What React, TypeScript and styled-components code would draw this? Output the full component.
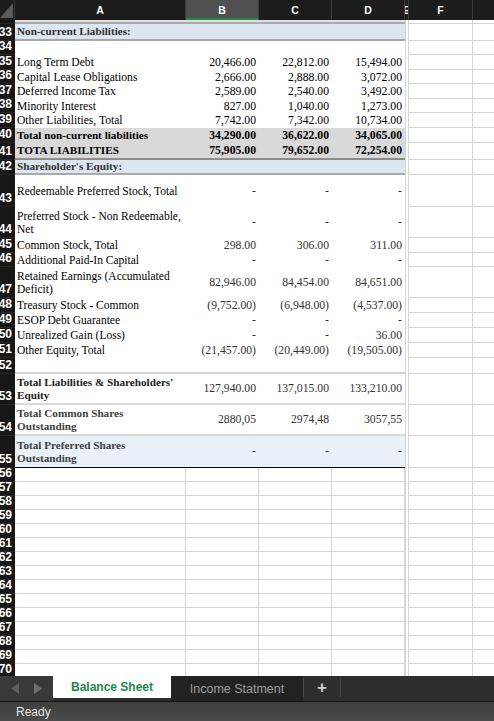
import React from 'react';
import styled, { createGlobalStyle } from 'styled-components';

const COLS = '15px 171px 73px 73px 73px 4px 64px 64px';

const GlobalStyle = createGlobalStyle`
  html, body { margin: 0; padding: 0; background: #ffffff; overflow: hidden; }
  #root { width: 494px; height: 721px; overflow: hidden; }
`;

const Window = styled.div`
  width: 494px;
  height: 721px;
  display: flex;
  flex-direction: column;
  overflow: hidden;
  background: #ffffff;
`;

const HeaderBar = styled.div`
  flex: none;
  display: grid;
  grid-template-columns: ${COLS};
  height: 20px;
  background: #1c1c1c;
`;

const Corner = styled.div`
  box-sizing: border-box;
  border-right: 1px solid #3a3a3a;
  display: flex;
  align-items: flex-end;
  justify-content: flex-end;
  padding: 0 1px 2px 0;
`;

const ColHead = styled.div<{ $sel?: boolean }>`
  box-sizing: border-box;
  display: flex;
  align-items: center;
  justify-content: center;
  overflow: hidden;
  color: #ffffff;
  font: bold 10.5px 'Liberation Sans', Arial, sans-serif;
  border-right: 1px solid #3e3e3e;
  background: ${(p) => (p.$sel ? '#505050' : 'transparent')};
  border-bottom: 2px solid ${(p) => (p.$sel ? '#1f8a4c' : 'transparent')};
  padding-top: 2px;
`;

const Sheet = styled.div`
  flex: 1;
  display: flex;
  flex-direction: column;
  overflow: hidden;
`;

const Row = styled.div<{ $h: number }>`
  flex: none;
  display: grid;
  grid-template-columns: ${COLS};
  height: ${(p) => p.$h}px;
`;

const RowNum = styled.div`
  box-sizing: border-box;
  background: #171717;
  color: #ffffff;
  font: bold 12px 'Liberation Sans', Arial, sans-serif;
  display: flex;
  align-items: flex-end;
  justify-content: flex-end;
  padding: 0 3px 1px 0;
  overflow: hidden;
  white-space: nowrap;
  border-bottom: 1px solid #262626;
`;

type CellProps = {
  $fill?: string;
  $bb?: string;
  $grid?: boolean;
  $bold?: boolean;
  $color?: string;
  $size?: number;
};

const Cell = styled.div<CellProps>`
  box-sizing: border-box;
  display: flex;
  align-items: center;
  overflow: hidden;
  background: ${(p) => p.$fill || '#ffffff'};
  border-bottom: ${(p) => p.$bb || (p.$grid ? '1px solid #d6d6d6' : 'none')};
  border-right: ${(p) => (p.$grid ? '1px solid #d6d6d6' : 'none')};
  font-family: 'Liberation Serif', 'Times New Roman', serif;
  font-size: ${(p) => p.$size || 11.7}px;
  font-weight: ${(p) => (p.$bold ? 'bold' : 'normal')};
  color: ${(p) => p.$color || '#000000'};
  line-height: 13px;
`;

const LabelCell = styled(Cell)`
  padding-left: 2px;
  white-space: pre-line;
`;

const NumCell = styled(Cell)`
  justify-content: flex-end;
  padding-right: 3px;
  white-space: nowrap;
`;

const GapCell = styled.div`
  box-sizing: border-box;
  border-left: 1px solid #d6d6d6;
  border-right: 1px solid #d6d6d6;
  background: #ffffff;
`;

const GridCell = styled.div`
  box-sizing: border-box;
  background: #ffffff;
  border-right: 1px solid #d6d6d6;
  border-bottom: 1px solid #d6d6d6;
`;

const TabBar = styled.div`
  flex: none;
  height: 26px;
  box-sizing: border-box;
  display: flex;
  background: #2e2e2e;
  border-bottom: 1px solid #161616;
`;

const NavArea = styled.div`
  width: 53px;
  display: flex;
  align-items: center;
  justify-content: space-around;
  padding: 0 4px;
  box-sizing: border-box;
  background: #393939;
`;

const Tab = styled.div<{ $active?: boolean; $w: number }>`
  width: ${(p) => p.$w}px;
  box-sizing: border-box;
  display: flex;
  align-items: center;
  justify-content: center;
  font-family: 'Liberation Sans', Arial, sans-serif;
  font-size: ${(p) => (p.$active ? 12 : 12.5)}px;
  font-weight: ${(p) => (p.$active ? 'bold' : 'normal')};
  color: ${(p) => (p.$active ? '#1b8a4b' : '#9c9c9c')};
  background: ${(p) => (p.$active ? '#ffffff' : '#222222')};
  height: ${(p) => (p.$active ? '22px' : '100%')};
`;

const AddTab = styled.div`
  width: 38px;
  display: flex;
  align-items: center;
  justify-content: center;
  box-sizing: border-box;
  margin: 2px 0 4px;
  border-left: 1px solid #4a4a4a;
  border-right: 1px solid #4a4a4a;
  color: #cfcfcf;
  font: bold 17px 'Liberation Sans', Arial, sans-serif;
`;

const StatusBar = styled.div`
  flex: none;
  height: 19px;
  display: flex;
  align-items: center;
  padding-left: 16px;
  background: linear-gradient(#3f3f3f, #4a4a4a);
  color: #e4e4e4;
  font: 12px 'Liberation Sans', Arial, sans-serif;
`;

type RowDef = {
  n: number | '';
  h: number;
  label?: string;
  vals?: [string, string, string];
  fill?: string;
  bb?: string;
  bold?: boolean;
  numBold?: boolean;
  color?: string;
  numColor?: string;
  labelSize?: number;
};

const dash: [string, string, string] = ['-', '-', '-'];

const rows: RowDef[] = [
  { n: '', h: 4, fill: '#dedede', bb: '2px solid #ababab' },
  { n: 33, h: 17, label: 'Non-current Liabilities:', fill: '#dce6f1', bb: '2px solid #a6a6a6', bold: true, color: '#333333', labelSize: 11.2 },
  { n: 34, h: 14 },
  { n: 35, h: 15, label: 'Long Term Debt', vals: ['20,466.00', '22,812.00', '15,494.00'] },
  { n: 36, h: 14, label: 'Capital Lease Obligations', vals: ['2,666.00', '2,888.00', '3,072.00'] },
  { n: 37, h: 15, label: 'Deferred Income Tax', vals: ['2,589.00', '2,540.00', '3,492.00'] },
  { n: 38, h: 14, label: 'Minority Interest', vals: ['827.00', '1,040.00', '1,273.00'] },
  { n: 39, h: 15, label: 'Other Liabilities, Total', vals: ['7,742.00', '7,342.00', '10,734.00'] },
  { n: 40, h: 15, label: 'Total non-current liabilities', vals: ['34,290.00', '36,622.00', '34,065.00'], fill: '#d9d9d9', bold: true, numBold: true, labelSize: 11.2 },
  { n: 41, h: 17, label: 'TOTA LIABILITIES', vals: ['75,905.00', '79,652.00', '72,254.00'], fill: '#d9d9d9', bb: '2px solid #8c8c8c', bold: true, numBold: true, labelSize: 11.2 },
  { n: 42, h: 15, label: "Shareholder's Equity:", fill: '#dce6f1', bb: '2px solid #a9a9a9', bold: true, color: '#333333', labelSize: 11.2 },
  { n: 43, h: 32, label: 'Redeemable Preferred Stock, Total', vals: dash, labelSize: 11.5, numColor: '#333333' },
  { n: 44, h: 31, label: 'Preferred Stock - Non Redeemable,\nNet', vals: dash, labelSize: 11.5, numColor: '#333333' },
  { n: 45, h: 15, label: 'Common Stock, Total', vals: ['298.00', '306.00', '311.00'], labelSize: 11.5, numColor: '#333333' },
  { n: 46, h: 14, label: 'Additional Paid-In Capital', vals: dash, labelSize: 11.5, numColor: '#333333' },
  { n: 47, h: 31, label: 'Retained Earnings (Accumulated\nDeficit)', vals: ['82,946.00', '84,454.00', '84,651.00'], labelSize: 11.5, numColor: '#333333' },
  { n: 48, h: 15, label: 'Treasury Stock - Common', vals: ['(9,752.00)', '(6,948.00)', '(4,537.00)'], labelSize: 11.5, numColor: '#333333' },
  { n: 49, h: 15, label: 'ESOP Debt Guarantee', vals: dash, labelSize: 11.5, numColor: '#333333' },
  { n: 50, h: 15, label: 'Unrealized Gain (Loss)', vals: ['-', '-', '36.00'], labelSize: 11.5, numColor: '#333333' },
  { n: 51, h: 15, label: 'Other Equity, Total', vals: ['(21,457.00)', '(20,449.00)', '(19,505.00)'], labelSize: 11.5, numColor: '#333333' },
  { n: 52, h: 16, bb: '2px solid #d3d3d3' },
  { n: 53, h: 31, label: "Total Liabilities & Shareholders'\nEquity", vals: ['127,940.00', '137,015.00', '133,210.00'], bb: '2px solid #d9d9d9', bold: true, color: '#222222', labelSize: 11.2, numColor: '#333333' },
  { n: 54, h: 31, label: 'Total Common Shares\nOutstanding', vals: ['2880,05', '2974,48', '3057,55'], bb: '2px solid #d9d9d9', bold: true, color: '#404040', labelSize: 11.2, numColor: '#333333' },
  { n: 55, h: 32, label: 'Total Preferred Shares\nOutstanding', vals: dash, fill: '#e9f0f8', bb: '1px solid #000000', bold: true, color: '#404040', labelSize: 11.2, numColor: '#333333' },
];

const emptyRows = Array.from({ length: 15 }, (_, i) => 56 + i);

const SelectAll = () => (
  <svg width="13" height="15" viewBox="0 0 13 15">
    <polygon points="13,0 13,15 0,15" fill="#5a5a5a" />
  </svg>
);

const Arrow = ({ dir, color }: { dir: 'l' | 'r'; color: string }) => (
  <svg width="8" height="11" viewBox="0 0 8 11">
    <polygon points={dir === 'l' ? '8,0 8,11 0,5.5' : '0,0 0,11 8,5.5'} fill={color} />
  </svg>
);

const DataRow = ({ r }: { r: RowDef }) => {
  const vals = r.vals || ['', '', ''];
  return (
    <Row $h={r.h}>
      <RowNum>{r.n}</RowNum>
      <LabelCell $fill={r.fill} $bb={r.bb} $bold={r.bold} $color={r.color} $size={r.labelSize || 11.6}>
        {r.label}
      </LabelCell>
      {vals.map((v, i) => (
        <NumCell key={i} $fill={r.fill} $bb={r.bb} $bold={r.numBold} $color={r.numColor || r.color}>
          {v}
        </NumCell>
      ))}
      <GapCell />
      <GridCell />
      <GridCell />
    </Row>
  );
};

const EmptyRow = ({ n }: { n: number }) => (
  <Row $h={14}>
    <RowNum>{n}</RowNum>
    <Cell $grid />
    <Cell $grid />
    <Cell $grid />
    <Cell $grid />
    <GapCell />
    <GridCell />
    <GridCell />
  </Row>
);

export default function App() {
  return (
    <Window>
      <GlobalStyle />
      <HeaderBar>
        <Corner>
          <SelectAll />
        </Corner>
        <ColHead>A</ColHead>
        <ColHead $sel>B</ColHead>
        <ColHead>C</ColHead>
        <ColHead>D</ColHead>
        <ColHead>E</ColHead>
        <ColHead>F</ColHead>
        <ColHead />
      </HeaderBar>
      <Sheet>
        {rows.map((r, i) => (
          <DataRow key={i} r={r} />
        ))}
        {emptyRows.map((n) => (
          <EmptyRow key={n} n={n} />
        ))}
      </Sheet>
      <TabBar>
        <NavArea>
          <Arrow dir="l" color="#5e5e5e" />
          <Arrow dir="r" color="#6e6e6e" />
        </NavArea>
        <Tab $active $w={118}>Balance Sheet</Tab>
        <Tab $w={132}>Income Statment</Tab>
        <AddTab>+</AddTab>
      </TabBar>
      <StatusBar>Ready</StatusBar>
    </Window>
  );
}
